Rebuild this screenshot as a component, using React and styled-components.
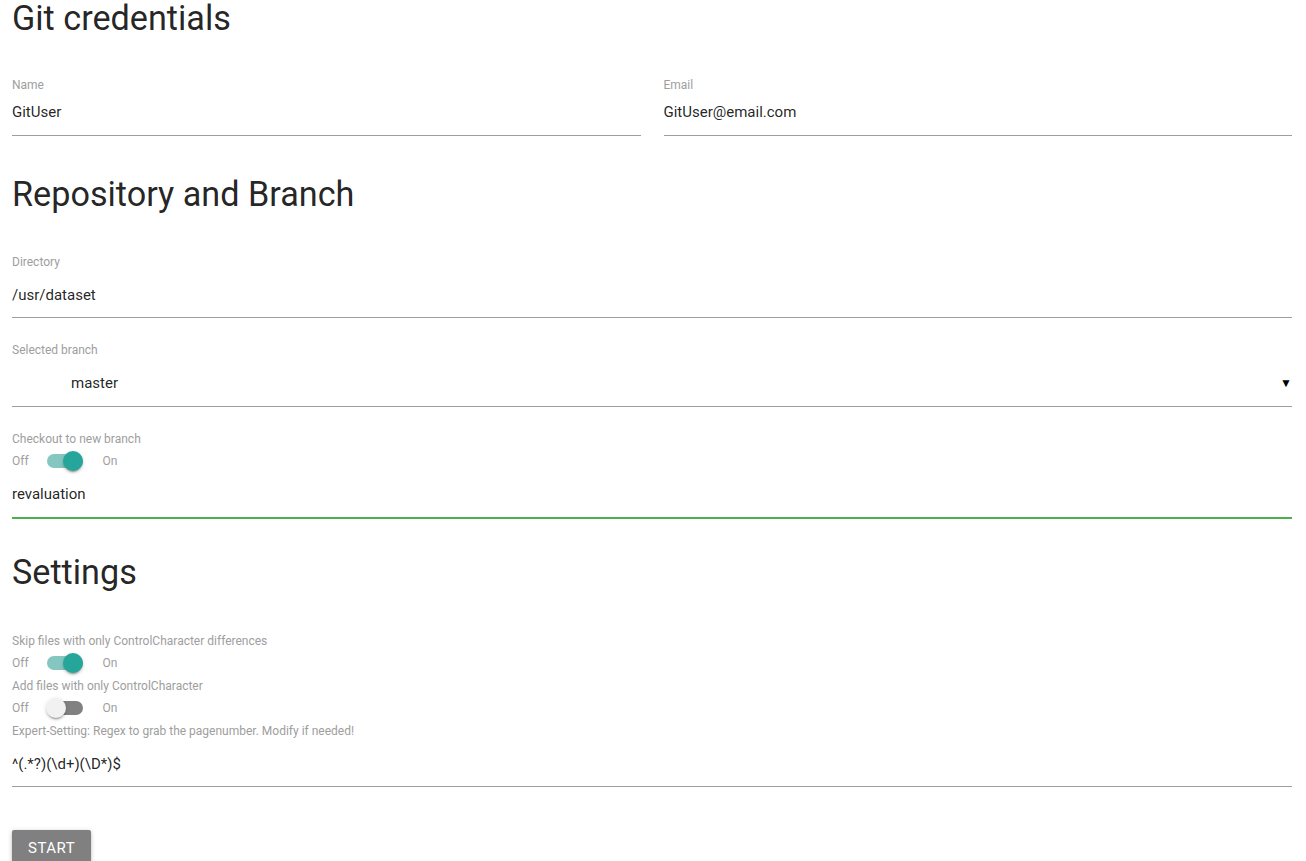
import React from "react";
import styled, { createGlobalStyle } from "styled-components";

const Global = createGlobalStyle`
  html, body { margin: 0; padding: 0; background: #fff; }
  body { font-family: Roboto, "Noto Sans", sans-serif; color: rgba(0,0,0,0.87); }
  * { box-sizing: border-box; }
`;

const Page = styled.div`
  padding: 0 14px 0 12px;
`;

const Heading = styled.h4`
  font-size: 34.2px;
  font-weight: 400;
  line-height: 1.1;
  margin: ${(p) => p.$mt}px 0 0 0;
  color: rgba(0,0,0,0.87);
`;

const Row = styled.div`
  display: grid;
  grid-template-columns: 1fr 1fr;
  column-gap: 23px;
`;

const Field = styled.div`
  margin-top: ${(p) => p.$mt ?? 0}px;
`;

const Label = styled.div`
  font-size: 12px;
  color: #9e9e9e;
  line-height: 14px;
  margin-top: ${(p) => p.$mt ?? 0}px;
`;

const Value = styled.div`
  font-size: 15px;
  line-height: 20px;
  padding: ${(p) => p.$pt ?? 16}px 0 ${(p) => p.$pb ?? 13}px ${(p) => p.$indent ?? 0}px;
  border-bottom: 1px solid ${(p) => (p.$valid ? "#4caf50" : "#9e9e9e")};
  box-shadow: ${(p) => (p.$valid ? "0 1px 0 0 #4caf50" : "none")};
  color: rgba(0,0,0,0.87);
  display: flex;
  align-items: center;
  justify-content: space-between;
`;

const Arrow = styled.span`
  font-size: 12px;
  color: #000;
`;

const SwitchRow = styled.div`
  display: flex;
  align-items: center;
  font-size: 12px;
  color: #9e9e9e;
  height: 20px;
  margin-top: 5px;
`;

const Lever = styled.span`
  position: relative;
  display: inline-block;
  width: 36px;
  height: 14px;
  border-radius: 15px;
  margin: 0 20px 0 18px;
  background: ${(p) => (p.$on ? "#84c7c1" : "#818181")};

  &::after {
    content: "";
    position: absolute;
    top: -3px;
    left: ${(p) => (p.$on ? "16px" : "-1px")};
    width: 20px;
    height: 20px;
    border-radius: 50%;
    background: ${(p) => (p.$on ? "#26a69a" : "#f1f1f1")};
    box-shadow: 0 3px 1px -2px rgba(0,0,0,0.2), 0 2px 2px 0 rgba(0,0,0,0.14), 0 1px 5px 0 rgba(0,0,0,0.12);
  }
`;

const Button = styled.button`
  margin-top: 43px;
  height: 36px;
  padding: 0 16px;
  border: none;
  border-radius: 2px;
  background: #808080;
  color: #fff;
  font-family: Roboto, sans-serif;
  font-size: 15px;
  letter-spacing: 0.5px;
  text-transform: uppercase;
  box-shadow: 0 2px 2px 0 rgba(0,0,0,0.14), 0 3px 1px -2px rgba(0,0,0,0.12), 0 1px 5px 0 rgba(0,0,0,0.2);
`;

const Toggle = ({ on }) => (
  <SwitchRow>
    Off
    <Lever $on={on} />
    On
  </SwitchRow>
);

export default function App() {
  return (
    <Page>
      <Global />
      <Heading $mt={0}>Git credentials</Heading>
      <Row>
        <Field $mt={40}>
          <Label>Name</Label>
          <Value $pt={10}>GitUser</Value>
        </Field>
        <Field $mt={40}>
          <Label>Email</Label>
          <Value $pt={10}>GitUser@email.com</Value>
        </Field>
      </Row>
      <Heading $mt={40}>Repository and Branch</Heading>
      <Field $mt={42}>
        <Label>Directory</Label>
        <Value $pt={16} $pb={12}>/usr/dataset</Value>
      </Field>
      <Field $mt={25}>
        <Label>Selected branch</Label>
        <Value $indent={59} $pt={16}>
          <span>master</span>
          <Arrow>▼</Arrow>
        </Value>
      </Field>
      <Field $mt={25}>
        <Label>Checkout to new branch</Label>
        <Toggle on />
        <Value $pt={13} $valid>revaluation</Value>
      </Field>
      <Heading $mt={36}>Settings</Heading>
      <Field $mt={42}>
        <Label>Skip files with only ControlCharacter differences</Label>
        <Toggle on />
        <Label $mt={6}>Add files with only ControlCharacter</Label>
        <Toggle on={false} />
        <Label $mt={6}>Expert-Setting: Regex to grab the pagenumber. Modify if needed!</Label>
        <Value $pt={16} $pb={12}>{"^(.*?)(\\d+)(\\D*)$"}</Value>
      </Field>
      <Button>Start</Button>
    </Page>
  );
}
